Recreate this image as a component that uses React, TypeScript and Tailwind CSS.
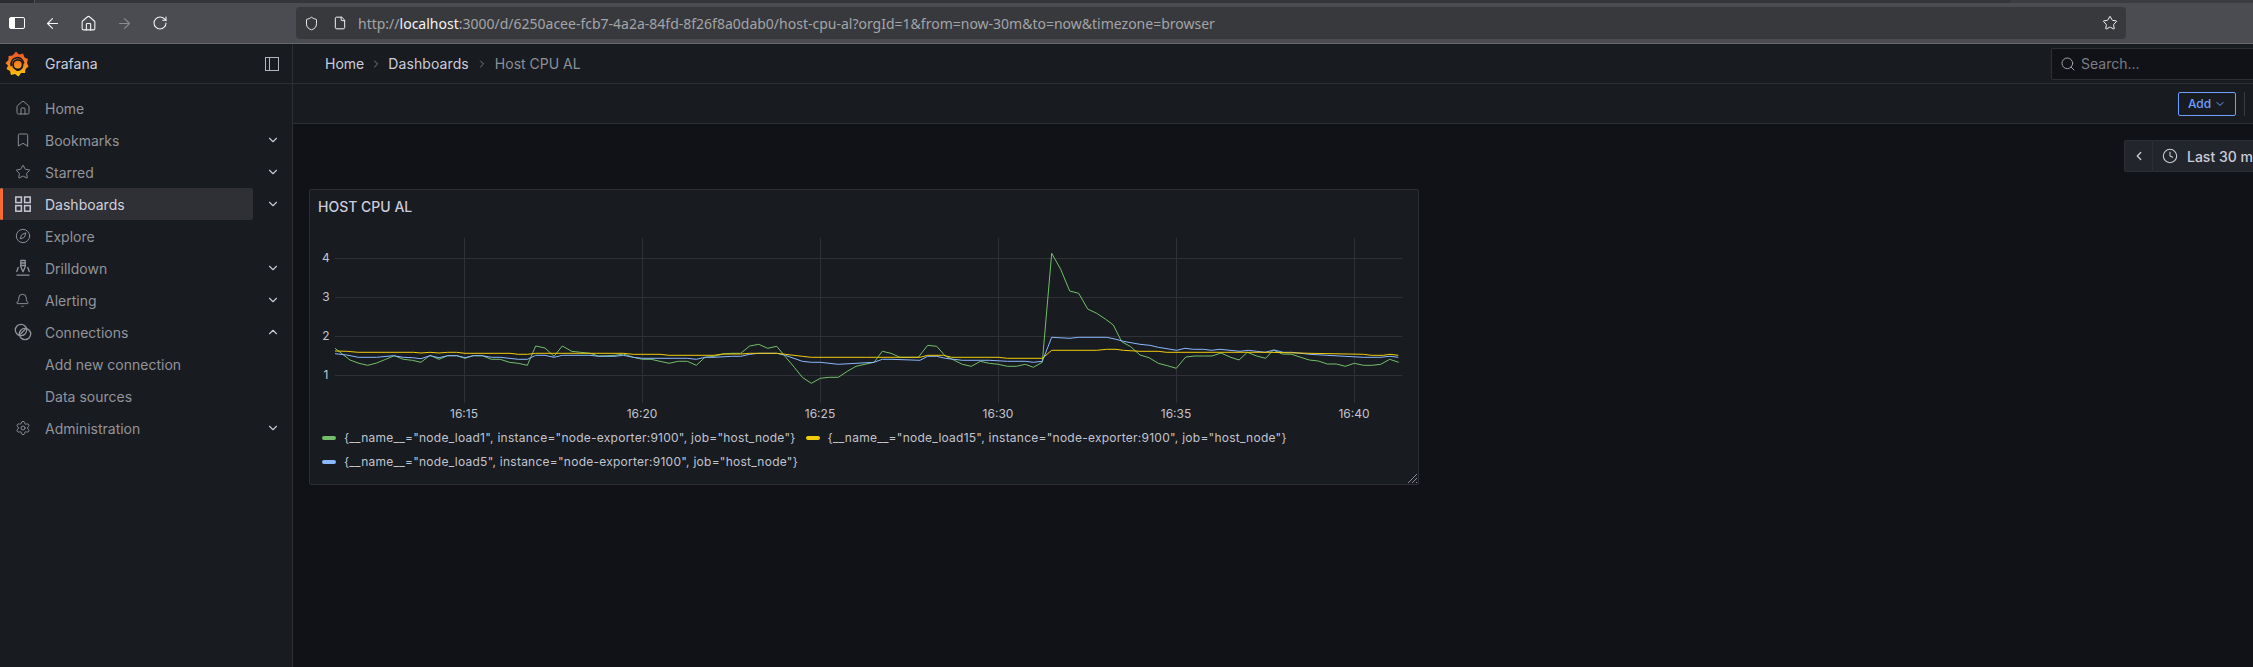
import React from "react";
import { ArrowLeft, ArrowRight, RotateCw, House, Shield, File, Star, Bookmark, Compass, Bell, Settings, ChevronDown, ChevronUp, ChevronLeft, ChevronRight, Search, Clock } from "lucide-react";

type P = number[][];
const seg = (ox: number, oy: number, pts: P) => pts.map(([x, y]) => `${(ox + x / 3).toFixed(1)},${(oy + y / 3).toFixed(1)}`).join(" ");

const green = [
  seg(330, 330, [[15,55],[60,90],[87,100],[113,106],[140,99],[167,88],[193,77],[220,88],[247,91],[273,97],[300,76],[327,88],[353,77],[380,77],[405,85],[430,77],[457,77],[484,88],[511,88],[538,97],[565,100],[592,106],[617,48],[645,54],[672,79],[697,48],[725,64],[752,67],[780,70],[805,78]]),
  seg(600, 330, [[20,77],[45,76],[70,72],[100,82],[127,88],[153,88],[180,94],[207,100],[235,94],[262,94],[289,106],[315,82],[342,79],[369,72],[395,70],[422,70],[449,48],[476,43],[503,55],[530,49],[556,80],[583,112],[607,142],[634,160],[661,145],[688,142],[715,142],[742,124],[768,109],[795,103],[822,97]]),
  seg(860, 330, [[67,64],[93,70],[120,82],[147,82],[175,82],[203,46],[230,49],[256,78],[283,91],[307,103],[334,109],[361,94],[388,100],[415,103],[442,109],[469,109],[496,103],[520,112],[547,97]]),
  seg(1040, 240, [[35,40],[62,88],[89,153],[116,160],[143,207],[170,220],[197,238],[220,255],[245,305],[272,320],[300,345],[327,353],[355,370],[382,377],[409,385],[437,351],[464,348],[491,348],[516,348],[543,339],[570,351],[597,360],[622,337],[650,348],[677,355],[700,330],[727,342],[755,343],[782,352],[808,360],[835,363],[862,372],[889,372],[916,379],[943,370],[970,376],[997,376],[1022,373],[1049,358],[1076,367]]),
].join(" ");

const blue = [
  seg(330, 330, [[15,71],[50,75],[85,82],[140,82],[190,77],[220,82],[247,83],[273,86],[300,77],[327,83],[353,77],[380,77],[405,83],[430,77],[457,77],[484,82],[511,82],[565,88],[592,88],[617,76],[645,76],[672,82],[697,76],[780,76],[805,79]]),
  seg(600, 330, [[45,79],[70,76],[100,82],[127,85],[153,85],[207,85],[262,85],[289,88],[315,82],[342,82],[395,79],[422,79],[449,73],[476,70],[530,70],[556,76],[607,94],[634,97],[661,97],[715,103],[768,100],[822,97]]),
  seg(860, 330, [[67,88],[93,88],[180,91],[203,79],[230,79],[256,85],[307,91],[361,91],[388,91],[442,94],[496,94],[520,97],[547,94],[575,22],[630,25],[655,22],[740,22],[768,28],[790,34]]),
  seg(1130, 330, [[30,43],[60,46],[85,52],[140,61],[165,55],[190,58],[220,58],[245,61],[270,58],[300,61],[330,64],[355,61],[380,64],[405,67],[432,60],[460,67],[485,67],[540,73],[590,76],[645,79],[700,82],[750,82],[780,79],[805,82]]),
].join(" ");

const yellow = [
  seg(330, 330, [[15,63],[50,64],[85,67],[250,67],[273,69],[300,67],[327,69],[353,67],[380,67],[405,70],[540,70],[565,73],[592,73],[617,70],[800,70]]),
  seg(600, 330, [[70,70],[100,73],[180,73],[207,76],[342,76],[369,72],[422,72],[449,70],[530,70],[556,73],[607,79],[634,82],[800,82]]),
  seg(860, 330, [[50,82],[180,82],[203,76],[250,76],[275,82],[415,82],[442,85],[547,85],[575,61],[710,61],[740,58],[768,58],[790,61]]),
  seg(1130, 330, [[30,64],[85,64],[110,67],[420,67],[540,70],[700,73],[725,76],[760,76],[780,73],[805,76]]),
].join(" ");

const DrillIcon = () => (
  <svg width="18" height="18" viewBox="0 0 18 18" fill="none" stroke="currentColor" strokeWidth="1.3" strokeLinecap="round" strokeLinejoin="round">
    <path d="M3 16.2h12" />
    <path d="M6.8 1.5h4.4v6.2L9 12.8 6.8 7.7z" />
    <path d="M6.8 4h4.4M6.8 6.5h4.4" />
    <path d="M4.2 8.5 2.8 12.5M13.8 8.5l1.4 4" />
  </svg>
);

const ConnIcon = () => (
  <svg width="18" height="18" viewBox="0 0 18 18" fill="none" stroke="currentColor" strokeWidth="1.3" strokeLinecap="round">
    <circle cx="7" cy="7" r="5.7" />
    <circle cx="11" cy="11" r="5.7" />
    <path d="M6.5 11 11 6.5" />
  </svg>
);

const GridIcon = () => (
  <svg width="18" height="18" viewBox="0 0 18 18" fill="none" stroke="currentColor" strokeWidth="1.5">
    <rect x="1.8" y="2" width="5.6" height="5.6" />
    <rect x="10.6" y="2" width="5.6" height="5.6" />
    <rect x="1.8" y="10.6" width="5.6" height="5.6" />
    <rect x="10.6" y="10.6" width="5.6" height="5.6" />
  </svg>
);

const Logo = () => (
  <svg width="24" height="26" viewBox="0 0 24 26">
    <defs>
      <linearGradient id="gf" x1="0" y1="0" x2="0" y2="1">
        <stop offset="0" stopColor="#f0502a" />
        <stop offset="0.55" stopColor="#f78a1e" />
        <stop offset="1" stopColor="#fbca0a" />
      </linearGradient>
    </defs>
    <polygon fill="url(#gf)" points="11,0.5 14,3.5 18,2.5 19.5,6.5 23,8 22,12 23.5,15.5 20.5,18 20,22 16,22 13.5,25.5 10,23 6,24 5,20 1.5,18 3,14.5 0.5,12 3.5,9 3.5,5 7.5,4.5" />
    <path d="M6.2 14.5c-.8-3.8 1.6-7.2 5.2-7.8 3.6-.6 6.8 1.8 7.2 5.2" fill="none" stroke="#181b1f" strokeWidth="1.6" strokeLinecap="round" />
    <circle cx="12.8" cy="13.6" r="4.8" fill="none" stroke="#181b1f" strokeWidth="1.8" />
    <path d="M15 13.7a2.2 2.2 0 1 1-2.2-2.2" fill="none" stroke="#f78a1e" strokeWidth="0" />
    <path d="M17.6 14.5c-.3 3.2-3 5.2-5.8 4.8" fill="none" stroke="#181b1f" strokeWidth="1.2" strokeLinecap="round" />
  </svg>
);

function NavRow({ icon, label, chevron, active }: { icon?: React.ReactNode; label: string; chevron?: "down" | "up"; active?: boolean }) {
  return (
    <div className="flex h-[32px] items-center">
      <div className={`relative flex h-full w-[253px] items-center rounded-r-[2px] ${active ? "bg-[#2e3036] text-[#d0d1de]" : "text-[#93949c]"}`}>
        {active && <div className="absolute left-0 top-0 h-full w-[3px] rounded-[2px] bg-[#fa6a35]" />}
        <div className={`flex w-[45px] shrink-0 items-center justify-center ${active ? "text-[#c6c7d2]" : "text-[#93949c]"}`}>{icon}</div>
        <span className="text-[14px]">{label}</span>
      </div>
      <div className="flex flex-1 items-center justify-center text-[#c6c7d2]">
        {chevron === "down" && <ChevronDown size={14} strokeWidth={2} />}
        {chevron === "up" && <ChevronUp size={14} strokeWidth={2} />}
      </div>
    </div>
  );
}

function Legend({ color, text }: { color: string; text: string }) {
  return (
    <div className="flex h-[24px] items-center whitespace-nowrap pr-[10px]">
      <div className="mr-[8px] h-[4px] w-[14px] rounded-[2px]" style={{ background: color }} />
      <span className="text-[12px] tracking-[0.25px] text-[#c3c4d0]">{text}</span>
    </div>
  );
}

export default function App() {
  const gy = [258.5, 297.5, 336.5, 375.5];
  const gx = [464.5, 642.5, 820.5, 998.5, 1176.5, 1354.5];
  const xl = ["16:15", "16:20", "16:25", "16:30", "16:35", "16:40"];
  const yl = ["4", "3", "2", "1"];
  return (
    <div className="flex h-[667px] w-[2253px] flex-col overflow-hidden bg-[#111217] font-['Inter',sans-serif]">
      {/* browser chrome */}
      <div className="flex h-[3px] shrink-0 bg-[#3a3c41]">
        <div className="h-full w-[35px] border-r border-[#55575c] bg-[#2a2c30]" />
        <div className="h-full w-[1975px] bg-[#33353a]" />
      </div>
      <div className="flex h-[41px] shrink-0 items-center border-b border-[#68696d] bg-[#4a4c51] text-[#f4f4f5]">
        <div className="flex w-[296px] items-center pl-[9px]">
          <div className="h-[12px] w-[16px] rounded-[2px] border-[1.5px] border-white bg-[linear-gradient(90deg,#ffffff_0_35%,transparent_35%)]" />
          <ArrowLeft size={17} strokeWidth={1.6} className="ml-[19px]" />
          <House size={17} strokeWidth={1.5} className="ml-[19px]" />
          <ArrowRight size={17} strokeWidth={1.6} className="ml-[19px] text-[#8b8c90]" />
          <RotateCw size={16} strokeWidth={1.6} className="ml-[19px]" />
        </div>
        <div className="flex h-[32px] w-[1830px] items-center rounded-[4px] bg-[#38393d]">
          <Shield size={15} strokeWidth={1.5} className="ml-[8px]" />
          <File size={14} strokeWidth={1.7} className="ml-[14px]" />
          <span className="ml-[11px] whitespace-nowrap font-['Noto_Sans',sans-serif] text-[14px] text-[#a3a4a7]">
            http://<span className="text-[#f4f4f5]">localhost</span>:3000/d/6250acee-fcb7-4a2a-84fd-8f26f8a0dab0/host-cpu-al?orgId=1&amp;from=now-30m&amp;to=now&amp;timezone=browser
          </span>
          <div className="flex-1" />
          <Star size={16} strokeWidth={1.5} className="mr-[8px]" />
        </div>
      </div>

      <div className="flex min-h-0 flex-1">
        {/* sidebar */}
        <aside className="w-[293px] shrink-0 border-r border-[#2d2f35] bg-[#181b1f]">
          <div className="flex h-[40px] items-center border-b border-[#2d2f35]">
            <div className="ml-[5px] w-[40px]"><Logo /></div>
            <span className="text-[14px] text-[#ccccdc]">Grafana</span>
            <div className="ml-auto mr-[13px] flex h-[14px] w-[14px] border-[1.5px] border-[#b4b5bf]">
              <div className="h-full w-[4px] border-r-[1.5px] border-[#b4b5bf]" />
            </div>
          </div>
          <nav className="pt-[8px]">
            <NavRow icon={<House size={16} strokeWidth={1.4} />} label="Home" />
            <NavRow icon={<Bookmark size={16} strokeWidth={1.4} />} label="Bookmarks" chevron="down" />
            <NavRow icon={<Star size={16} strokeWidth={1.4} />} label="Starred" chevron="down" />
            <NavRow icon={<GridIcon />} label="Dashboards" chevron="down" active />
            <NavRow icon={<Compass size={16} strokeWidth={1.4} />} label="Explore" />
            <NavRow icon={<DrillIcon />} label="Drilldown" chevron="down" />
            <NavRow icon={<Bell size={15} strokeWidth={1.5} />} label="Alerting" chevron="down" />
            <NavRow icon={<ConnIcon />} label="Connections" chevron="up" />
            <NavRow label="Add new connection" />
            <NavRow label="Data sources" />
            <NavRow icon={<Settings size={16} strokeWidth={1.4} />} label="Administration" chevron="down" />
          </nav>
        </aside>

        {/* main */}
        <main className="min-w-0 flex-1 overflow-hidden">
          <div className="flex h-[40px] items-center border-b border-[#2d2f35] bg-[#181b1f]">
            <div className="flex items-center pl-[32px] text-[14px] text-[#ccccdc]">
              <span>Home</span>
              <ChevronRight size={12} strokeWidth={1.5} className="mx-[6px] text-[#9a9ba3]" />
              <span className="tracking-[0.1px]">Dashboards</span>
              <ChevronRight size={12} strokeWidth={1.5} className="mx-[7px] text-[#9a9ba3]" />
              <span className="text-[#8e8f97]">Host CPU AL</span>
            </div>
            <div className="-mr-[10px] ml-auto flex h-[32px] w-[212px] shrink-0 items-center rounded-l-[2px] border border-[#2d2f35] bg-[#111217] pl-[8px] text-[14px] text-[#7c7d85]">
              <Search size={16} strokeWidth={1.5} className="mr-[5px] text-[#a0a1a8]" />
              <span>Search...</span>
            </div>
          </div>
          <div className="flex h-[40px] items-center border-b border-[#2d2f35] bg-[#181b1f]">
            <div className="ml-auto flex items-center">
              <div className="flex h-[24px] w-[58px] items-center justify-center rounded-[2px] border border-[#6e9fff] text-[12px] font-medium text-[#6e9fff]">
                Add
                <ChevronDown size={12} strokeWidth={2} className="ml-[3px]" />
              </div>
              <div className="ml-[8px] mr-[8px] h-[24px] w-px bg-[#3a3c42]" />
            </div>
          </div>

          <div className="pt-[16px]">
            <div className="flex h-[32px] w-[2100px] items-stretch whitespace-nowrap pl-[1831px] text-[14px] font-medium text-[#ccccdc]">
              <div className="flex w-[29px] items-center justify-center rounded-l-[2px] border border-[#2d2f35] bg-[#22252b]">
                <ChevronLeft size={14} strokeWidth={2.2} />
              </div>
              <div className="flex items-center border-y border-r border-[#2d2f35] bg-[#22252b] pl-[9px] pr-[8px]">
                <Clock size={16} strokeWidth={1.6} className="mr-[9px]" />
                Last 30 minutes
              </div>
            </div>

            <section className="relative ml-[16px] mt-[17px] h-[296px] w-[1110px] rounded-[2px] border border-[#2d2f35] bg-[#181b1f]">
              <div className="flex h-[35px] items-center pb-[2px] pl-[8px] text-[14px] font-medium text-[#ccccdc]">HOST CPU AL</div>
              <svg width="1108" height="200" viewBox="310 225 1108 200" className="block font-['Inter',sans-serif]">
                {gy.map((y) => (
                  <line key={y} x1="335" x2="1402.5" y1={y} y2={y} stroke="#2f3136" />
                ))}
                {gx.map((x) => (
                  <line key={x} x1={x} x2={x} y1="238" y2="403" stroke="#2f3136" />
                ))}
                {yl.map((t, i) => (
                  <text key={t} x="326" y={gy[i] + 3.5} textAnchor="middle" fontSize="12" fill="#c3c4d0">{t}</text>
                ))}
                {xl.map((t, i) => (
                  <text key={t} x={gx[i] - 0.5} y="418" textAnchor="middle" fontSize="12" fill="#c3c4d0">{t}</text>
                ))}
                <polyline points={green} fill="none" stroke="#73bf69" strokeWidth="1" strokeLinejoin="round" />
                <polyline points={blue} fill="none" stroke="#8ab8ff" strokeWidth="1" strokeLinejoin="round" />
                <polyline points={yellow} fill="none" stroke="#f2cc0c" strokeWidth="1" strokeLinejoin="round" />
              </svg>
              <div className="mt-[1px] flex flex-wrap pl-[12px] pr-[100px]">
                <Legend color="#73bf69" text={'{__name__="node_load1", instance="node-exporter:9100", job="host_node"}'} />
                <Legend color="#f2cc0c" text={'{__name__="node_load15", instance="node-exporter:9100", job="host_node"}'} />
                <Legend color="#8ab8ff" text={'{__name__="node_load5", instance="node-exporter:9100", job="host_node"}'} />
              </div>
              <svg width="11" height="11" viewBox="0 0 11 11" className="absolute bottom-[0px] right-[0px]" stroke="#8a8b93" strokeWidth="1">
                <path d="M1 10 10 1M5 10l5-5M9 10l1-1" />
              </svg>
            </section>
          </div>
        </main>
      </div>
    </div>
  );
}
